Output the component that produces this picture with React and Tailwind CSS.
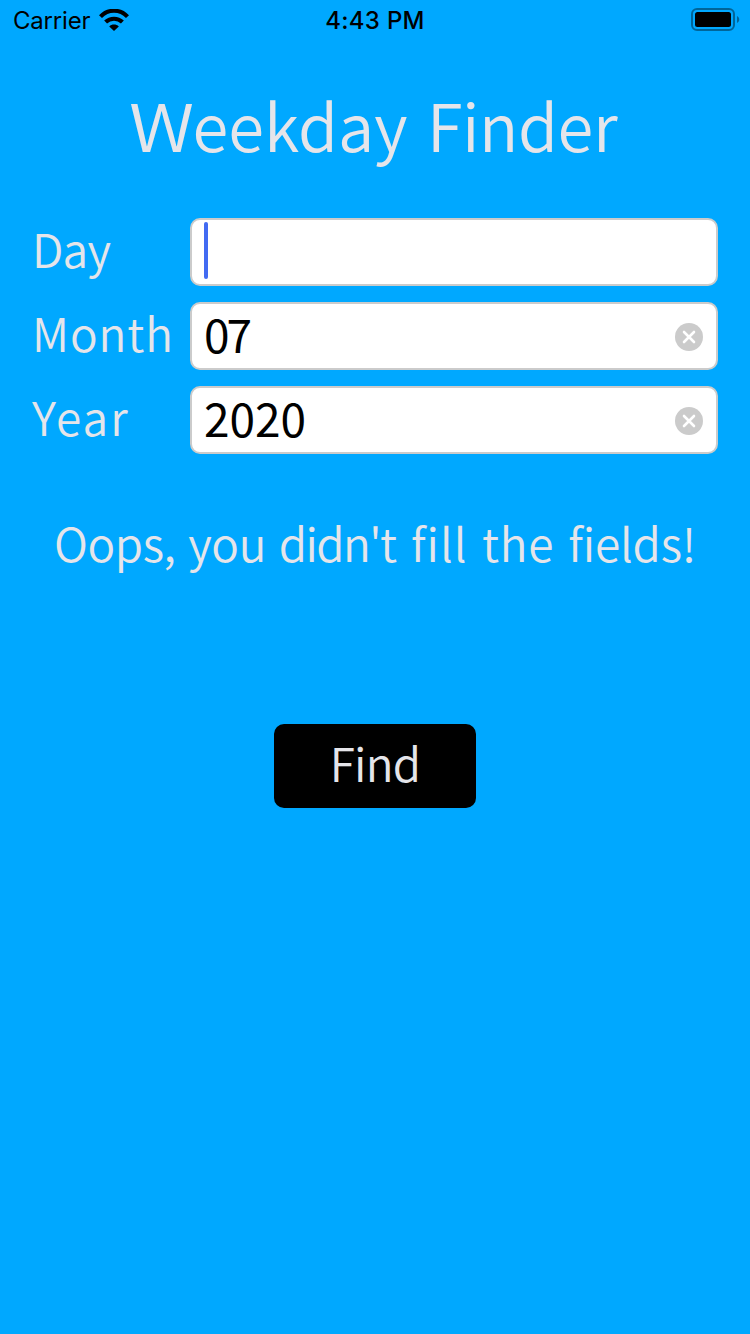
function WifiIcon() {
  return (
    <svg width="30" height="22" viewBox="0 0 30 22" fill="none" stroke="#000" strokeWidth="4.2">
      <path d="M1.5 7.6C9 -0.2 21 -0.2 28.500 7.600" />
      <path d="M6.600 13.100C11.300 8.600 18.700 8.600 23.400 13.100" />
      <path d="M10.200 17.400C12.800 15 17.200 15 19.800 17.400L15 22Z" fill="#000" stroke="none" />
    </svg>
  );
}

function BatteryIcon() {
  return (
    <svg width="49" height="24" viewBox="0 0 49 24" fill="none">
      <rect x="1" y="1" width="42" height="21" rx="5" stroke="#000" strokeOpacity="0.4" strokeWidth="2" />
      <rect x="4" y="4" width="36" height="15" rx="2.500" fill="#000" />
      <path d="M46 8C49 9.500 49 13.500 46 15Z" fill="#000" fillOpacity="0.4" />
    </svg>
  );
}

function ClearIcon() {
  return (
    <svg width="28" height="28" viewBox="0 0 28 28" className="mt-[2px]">
      <circle cx="14" cy="14" r="14" fill="#cbcbcb" />
      <path d="M9 9L19 19M19 9L9 19" stroke="#fff" strokeWidth="2.600" strokeLinecap="round" />
    </svg>
  );
}

function Field({ label, value, labelClass, valueClass }) {
  return (
    <div className="flex h-[68px] items-center">
      <div className="w-[158px] shrink-0 pb-2">
        <span className={"block whitespace-nowrap text-[46px] leading-[68px] " + labelClass}>{label}</span>
      </div>
      <div className="flex h-[68px] flex-1 items-center justify-between rounded-[10px] border-2 border-[#cbcbcb] bg-white pl-3 pr-[13px]">
        {value ? (
          <>
            <span className={"pb-1.5 text-[46px] font-normal leading-[64px] text-black " + valueClass}>{value}</span>
            <ClearIcon />
          </>
        ) : (
          <span className="mb-[3px] h-[57px] w-1 rounded-[2px] bg-[#426bf2]" />
        )}
      </div>
    </div>
  );
}

export default function App() {
  return (
    <div className="flex h-[1334px] w-[750px] flex-col overflow-hidden bg-[#00a8ff] font-['Noto_Sans_CJK_SC','Noto_Sans',sans-serif] font-[350] text-[#e5e5ea]">
      <header className="grid h-10 grid-cols-3 items-center font-['Inter',sans-serif] text-[24px] text-black">
        <div className="flex items-center gap-[9px] pl-[13px]">
          <span className="pt-[2px] font-normal tracking-[-0.2px]">Carrier</span>
          <WifiIcon />
        </div>
        <span className="pt-[2px] text-center text-[24px] font-medium tracking-[0.3px]">4:43 PM</span>
        <div className="flex justify-end pr-[10px]">
          <BatteryIcon />
        </div>
      </header>
      <h1 className="mt-9 h-[100px] whitespace-nowrap pr-1 text-center text-[65px] leading-[96px] [word-spacing:5px]">
        <span className="mr-[7px] inline-block origin-left scale-x-[1.15]">W</span>eekday <span className="tracking-[-0.4px]">Finder</span>
      </h1>
      <form className="mt-[42px] flex flex-col gap-4 px-8">
        <Field label="Day" labelClass="tracking-[-0.8px]" />
        <Field label="Month" labelClass="tracking-[0.9px]" value="07" valueClass="tracking-[-3px]" />
        <Field label="Year" labelClass="tracking-[2px]" value="2020" valueClass="" />
      </form>
      <p className="mt-[54px] h-[72px] whitespace-nowrap text-center text-[46px] leading-[68px] [word-spacing:3px]">
        <span className="tracking-[-0.4px]">Oops, you </span>
        <span className="mr-1 tracking-[-1.6px]">didn't </span>
        <span className="tracking-[1px]">fill </span>
        <span className="tracking-[0.8px]">the </span>
        <span className="tracking-[-0.2px]">fields!</span>
      </p>
      <button className="mx-auto mt-36 h-[84px] w-[202px] rounded-[10px] bg-black pb-2 text-center text-[46px] leading-[76px] tracking-[-0.8px]">Find</button>
    </div>
  );
}
